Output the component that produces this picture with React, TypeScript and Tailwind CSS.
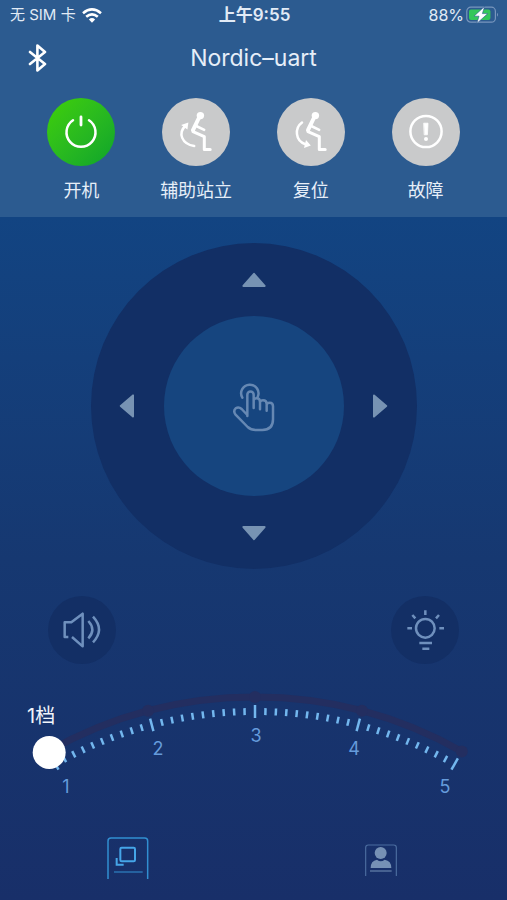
import { useState } from "react";
import type { ReactNode } from "react";

interface ModeButtonProps {
  label: string;
  active?: boolean;
  children: ReactNode;
}

// Gear scale: 41 ticks on a circle, one gear every 10 ticks
const CENTER_X = 255;
const CENTER_Y = 437;
const TICK_RADIUS = 412;
const TRACK_RADIUS = 420;
const SWEEP = 29.5;
const TICKS = 41;

function pointAt(angle: number, radius: number) {
  const rad = (angle * Math.PI) / 180;
  return {
    x: CENTER_X + radius * Math.sin(rad),
    y: CENTER_Y - radius * Math.cos(rad),
  };
}

function gearAngle(gear: number) {
  return ((gear - 3) / 2) * SWEEP;
}

function ModeButton({ label, active = false, children }: ModeButtonProps) {
  return (
    <button type="button" aria-pressed={active} className="flex flex-col items-center gap-[13px] text-lg leading-6 text-[#e6eef8]">
      <span
        className={`size-[68px] rounded-full ${
          active ? "bg-linear-to-br from-[#3fd000] to-[#0aa42a]" : "bg-[#c9cacb]"
        }`}
      >
        <svg viewBox="0 0 68 68" className="size-full" fill="none" stroke="white" strokeLinecap="round" strokeLinejoin="round">
          {children}
        </svg>
      </span>
      <span>{label}</span>
    </button>
  );
}

function SeatedFigure() {
  return (
    <>
      <circle cx="38.4" cy="17.6" r="3.7" fill="white" stroke="none" />
      <path d="M36.6 20.5L31 32.2" strokeWidth="4" />
      <path d="M34.2 28L42.2 31.8" strokeWidth="2.6" />
      <path d="M31 33.6L42.3 38.6V51.4H48.2" strokeWidth="3" />
    </>
  );
}

function StatusBar() {
  return (
    <div className="grid h-[30px] grid-cols-3 items-center pr-2 pl-2.5 text-base leading-5 text-[#e2ebf6]">
      <div className="flex items-center gap-1.5 whitespace-nowrap">
        <span className="text-[15px]">无 SIM 卡</span>
        <svg viewBox="0 0 20 15" className="h-[15px] w-5" fill="none" stroke="white" strokeWidth="2.6">
          <path d="M1 5.2Q10 -2.4 19 5.2" />
          <path d="M4.2 8.8Q10 3.8 15.8 8.8" />
          <path d="M6.9 11.4Q10 8.8 13.1 11.4L10 14.8Z" fill="white" stroke="none" />
        </svg>
      </div>
      <div className="text-center text-[17px] font-semibold whitespace-nowrap">上午9:55</div>
      <div className="flex items-center justify-end gap-0.5">
        <span>88%</span>
        <svg viewBox="0 0 33 18" className="h-[18px] w-[33px]">
          <rect x="0.8" y="1.2" width="28.6" height="15" rx="4" fill="none" stroke="#7896bd" strokeWidth="1.2" />
          <path d="M31 6.8Q33 8.8 31 10.8Z" fill="#7896bd" />
          <rect x="3" y="3.4" width="21.4" height="10.6" rx="2" fill="#35c759" />
          <path d="M18.6 0.4L8 10.2H13L10.800 17.4L21.800 7.600H16.400Z" fill="white" stroke="#2c5b90" strokeWidth="0.6" />
        </svg>
      </div>
    </div>
  );
}

function Header() {
  return (
    <header className="bg-[#2c5b90] pb-[14px]">
      <StatusBar />
      <div className="grid h-14 grid-cols-[1fr_auto_1fr] items-center px-7">
        <button type="button" aria-label="蓝牙" className="w-5">
          <svg viewBox="0 0 20 28" className="h-7 w-5" fill="none" stroke="white" strokeWidth="2.6" strokeLinecap="round" strokeLinejoin="round">
            <path d="M2 8L17 20L9.4 26.4V1.6L17 8L2 20" />
          </svg>
        </button>
        <h1 className="text-[23px] leading-7 text-[#e6eef8]">Nordic–uart</h1>
      </div>
      <div className="grid grid-cols-4 px-6 pt-3">
        <ModeButton label="开机" active>
          <path d="M26 22.2A14.5 14.5 0 1 0 42 22.2" strokeWidth="2.5" />
          <path d="M34 19V27" strokeWidth="2.8" />
        </ModeButton>
        <ModeButton label="辅助站立">
          <SeatedFigure />
          <path d="M32.2 48C19.5 46 16 35 23.2 28" strokeWidth="2.5" />
          <path d="M19.2 27L26.4 24.4L25.4 31.4Z" fill="white" stroke="none" />
        </ModeButton>
        <ModeButton label="复位">
          <SeatedFigure />
          <path d="M25 24.5C17.5 30 18 43 28.4 46.2" strokeWidth="2.5" />
          <path d="M29 42L33.8 47.4L27 50Z" fill="white" stroke="none" />
        </ModeButton>
        <ModeButton label="故障">
          <circle cx="34" cy="33.5" r="15.6" strokeWidth="2.5" />
          <path d="M32 25.2H36L35.4 36.8H32.6Z" fill="white" strokeWidth="0.8" />
          <circle cx="34" cy="41" r="2" fill="white" stroke="none" />
        </ModeButton>
      </div>
    </header>
  );
}

function Arrow({ label, className }: { label: string; className: string }) {
  return (
    <button type="button" aria-label={label} className={`flex size-12 items-center justify-center place-self-center ${className}`}>
      <svg viewBox="0 0 24 16" className="h-4 w-6 shrink-0" fill="#7793b3" stroke="#7793b3" strokeWidth="2" strokeLinejoin="round">
        <path d="M12 1.8L22.6 14H1.4Z" />
      </svg>
    </button>
  );
}

function DirectionPad() {
  return (
    <div className="mx-auto grid w-fit grid-cols-[73px_180px_73px] grid-rows-[73px_180px_73px] rounded-full bg-[#122f65]">
      <Arrow label="前进" className="col-start-2" />
      <Arrow label="左转" className="col-start-1 row-start-2 -rotate-90" />
      <button type="button" aria-label="手动" className="col-start-2 row-start-2 flex items-center justify-center rounded-full bg-[#16457f]">
        <svg viewBox="-3 0 240 240" className="size-20" fill="none" stroke="#6688b3" strokeWidth="7.5" strokeLinecap="round" strokeLinejoin="round">
          <path d="M97 150V86A9.500 9.500 0 0 1 116 86V126M116 102Q118 97 125 97Q135 97 135 108V130M135 108Q137 103 144 103Q155 103 155 114V134M155 116Q156 110 164 110Q174 110 174 121V160Q174 192 142 192H122Q108 192 98 183L61 145Q54 134 62 127Q71 121 80 129L97 147" />
          <path d="M82 95A26 26 0 1 1 128 93" />
        </svg>
      </button>
      <Arrow label="右转" className="col-start-3 row-start-2 rotate-90" />
      <Arrow label="后退" className="col-start-2 row-start-3 rotate-180" />
    </div>
  );
}

function RoundButton({ label, children }: { label: string; children: ReactNode }) {
  return (
    <button type="button" aria-label={label} className="size-[68px] rounded-full bg-[#132f65]">
      <svg viewBox="0 0 204 204" className="size-full" fill="none" stroke="#6f90bd" strokeWidth="7.5" strokeLinejoin="round">
        {children}
      </svg>
    </button>
  );
}

function GearScale() {
  const [gear, setGear] = useState(1);
  const trackStart = pointAt(-SWEEP, TRACK_RADIUS);
  const trackEnd = pointAt(SWEEP, TRACK_RADIUS);
  const handle = pointAt(gearAngle(gear), TRACK_RADIUS);
  const labels = [
    { x: 66, y: 113 },
    { x: 158, y: 75 },
    { x: 256, y: 62 },
    { x: 354, y: 75 },
    { x: 445, y: 113 },
  ];

  return (
    <div className="relative">
      <svg viewBox="0 0 507 130" className="w-full">
        <path
          d={`M${trackStart.x} ${trackStart.y}A${TRACK_RADIUS} ${TRACK_RADIUS} 0 0 1 ${trackEnd.x} ${trackEnd.y}`}
          fill="none"
          stroke="#232e60"
          strokeWidth="7"
        />
        {labels.map((_, i) => {
          const dot = pointAt(gearAngle(i + 1), TRACK_RADIUS);
          return <circle key={i} cx={dot.x} cy={dot.y} r="6" fill="#232e60" />;
        })}

        {Array.from({ length: TICKS }, (_, i) => {
          const major = i % 10 === 0;
          const angle = -SWEEP + (i / (TICKS - 1)) * SWEEP * 2;
          const outer = pointAt(angle, major ? TICK_RADIUS : TICK_RADIUS - 3);
          const inner = pointAt(angle, major ? TICK_RADIUS - 13 : TICK_RADIUS - 10);
          return (
            <line key={i} x1={outer.x} y1={outer.y} x2={inner.x} y2={inner.y} stroke="#73b7ee" strokeWidth="2.5" />
          );
        })}

        {labels.map((pos, i) => (
          <text key={i} x={pos.x} y={pos.y} textAnchor="middle" fill="#659bdb" className="text-lg">
            {i + 1}
          </text>
        ))}

        <circle cx={handle.x + 1} cy={handle.y + 1} r="16.500" fill="white" />
        <text x={handle.x - 7} y={handle.y - 28} textAnchor="middle" fill="#f1f5fb" className="text-[20px]">
          {gear}档
        </text>
      </svg>
      <input
        type="range"
        aria-label="档位"
        min={1}
        max={5}
        value={gear}
        onChange={(e) => setGear(Number(e.target.value))}
        className="absolute inset-0 size-full cursor-pointer opacity-0"
      />
    </div>
  );
}

function TabBar() {
  return (
    <nav className="mt-auto grid grid-cols-2 justify-items-center pb-[21px] pl-0.5">
      <button type="button" aria-label="控制" aria-current="page">
        <svg viewBox="51 51 126 126" className="size-[42px]" fill="none" stroke="#318fd1" strokeWidth="4.500">
          <path d="M54 177V63Q54 54 63 54H164Q173 54 173 63V177" />
          <rect x="91" y="83" width="44" height="41" rx="4" stroke="#45a5e8" strokeWidth="6" />
          <path d="M80 114V134H101" stroke="#45a5e8" strokeWidth="6" />
          <path d="M72 156H158" stroke="#2a72b2" />
        </svg>
      </button>
      <button type="button" aria-label="我的">
        <svg viewBox="60 51 126 126" className="size-[42px]" fill="none" stroke="#4b6c9f" strokeWidth="3.500">
          <path d="M77 168V83Q77 75 85 75H161Q169 75 169 83V168" />
          <circle cx="122" cy="99" r="18" fill="#7691b5" stroke="none" />
          <path d="M92 144Q92 122 111 119Q122 128 134 119Q154 122 154 144Z" fill="#7691b5" stroke="none" />
          <path d="M90 153H155" stroke="#6885ae" />
        </svg>
      </button>
    </nav>
  );
}

export default function App() {
  return (
    <div className="flex min-h-screen flex-col bg-[#18306a] font-['Inter','Noto_Sans_CJK_SC',sans-serif]">
      <Header />
      <main className="flex grow flex-col bg-linear-to-b from-[#124482] via-[#163871] to-[#182f69] pt-[26px]">
        <DirectionPad />
        <div className="mt-[27px] mb-4 flex justify-between px-12">
          <RoundButton label="喇叭">
            <path d="M61 123H50V79H70L104 53V151L72 123" />
            <path d="M121 75Q145 101 121 127" />
            <path d="M135 62Q171 101 135 139" />
          </RoundButton>
          <RoundButton label="车灯">
            <circle cx="103" cy="97" r="28" />
            <path d="M103 43V57M49 97H63M145 97H159M64 57L73 67M144 57L135 67" />
            <path d="M85 141H123M94 158H115" />
          </RoundButton>
        </div>
        <GearScale />
        <TabBar />
      </main>
    </div>
  );
}
